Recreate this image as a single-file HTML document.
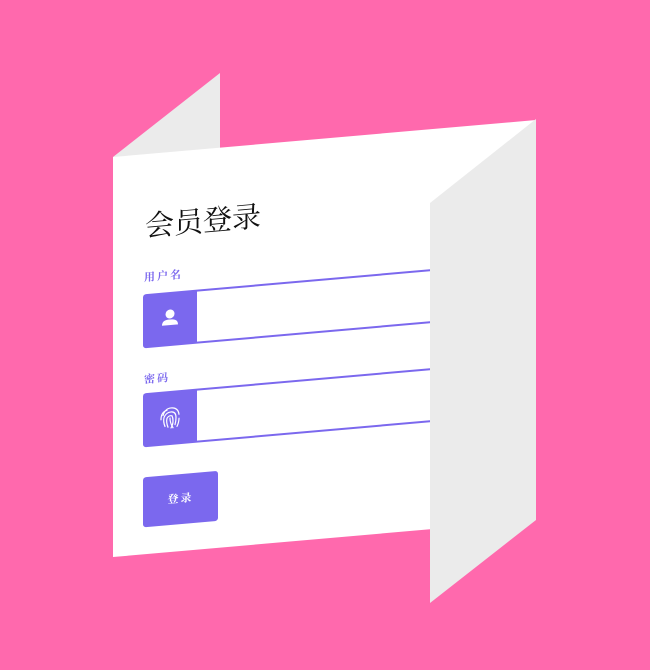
<!DOCTYPE html>
<html><head><meta charset="utf-8"><style>
html,body{margin:0;padding:0}
body{width:650px;height:670px;background:#ff69ad;position:relative;overflow:hidden;font-family:"Liberation Serif","Noto Serif CJK SC",serif}
svg.bg{position:absolute;left:0;top:0}
.panel{position:absolute;left:113px;top:157px;width:423px;height:400px;background:#fff;transform-origin:0 0;transform:skewY(-5deg);z-index:1;overflow:hidden}
.title{position:absolute;left:32px;top:50px;font-size:29px;color:#111;}
.lbl{position:absolute;left:31px;font-size:11px;font-weight:bold;color:#7b68ee;letter-spacing:2px}
.inp{position:absolute;left:30px;width:380px;height:54px}
.ic{position:absolute;left:0;top:0;width:54px;height:54px;background:#7b68ee;border-radius:3px 0 0 3px}
.line{position:absolute;left:54px;right:0;top:0;bottom:0;border-top:2px solid #7b68ee;border-bottom:2px solid #7b68ee;box-sizing:border-box}
.btn{position:absolute;left:30px;top:323px;width:75px;height:50px;background:#7b68ee;border-radius:3px;color:#fff;font-size:11px;font-weight:bold;text-align:center;line-height:50px;letter-spacing:2px}
svg.fg{position:absolute;left:0;top:0;z-index:2}
</style></head><body>
<svg class="bg" width="650" height="670"><polygon points="113,157 220,73 220,160 113,170" fill="#ebebeb"/></svg>
<div class="panel">
<div class="title">会员登录</div>
<div class="lbl" style="top:115px">用户名</div>
<div class="inp" style="top:140px"><div class="ic"><svg width="54" height="54" viewBox="0 0 54 54"><circle cx="27" cy="22" r="4.5" fill="#fff"/><path d="M19 33 Q19 27 27 27.5 Q35 27 35 33 Z" fill="#fff"/></svg></div><div class="line"></div></div>
<div class="lbl" style="top:217px">密码</div>
<div class="inp" style="top:239px"><div class="ic"><svg width="54" height="54" viewBox="0 0 54 54" fill="none" stroke="#fff" stroke-width="1.2" stroke-linecap="round"><path d="M20 24 Q22 17 28 17 Q35 17 36 24"/><path d="M18 28 Q18 20 24 19"/><path d="M22 35 Q20 30 21 26 Q23 21 28 21 Q33 21 33 27 Q33 31 32 34"/><path d="M25 36 Q23 31 24 27 Q26 24 29 25 Q30 27 30 30 Q30 34 28 37"/><path d="M27 27 Q27 32 30 37"/><path d="M36 28 Q36 32 34 36"/></svg></div><div class="line"></div></div>
<div class="btn">登录</div>
</div>
<svg class="fg" width="650" height="670"><polygon points="430,203 536,119 536,520 430,603" fill="#ebebeb"/></svg>
</body></html>
